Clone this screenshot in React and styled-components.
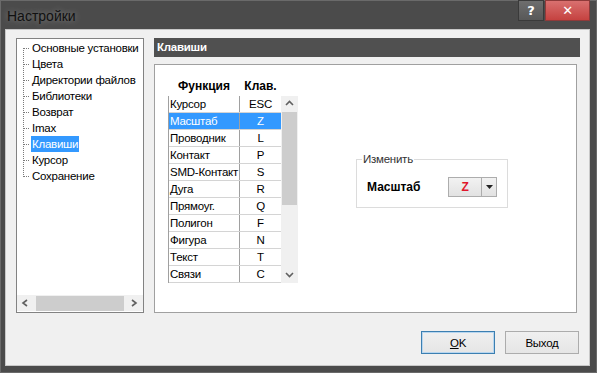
import React from 'react';
import styled, { createGlobalStyle } from 'styled-components';

const GlobalStyle = createGlobalStyle`
  html, body { margin: 0; padding: 0; background: #4a4a4a; }
  body {
    font-family: "Liberation Sans", Arial, sans-serif;
    font-size: 11.5px;
    letter-spacing: -0.25px;
    color: #000;
  }
  * { box-sizing: border-box; }
`;

const treeItems = [
  'Основные установки',
  'Цвета',
  'Директории файлов',
  'Библиотеки',
  'Возврат',
  'Imax',
  'Клавиши',
  'Курсор',
  'Сохранение',
];

const keys = [
  ['Курсор', 'ESC'],
  ['Масштаб', 'Z'],
  ['Проводник', 'L'],
  ['Контакт', 'P'],
  ['SMD-Контакт', 'S'],
  ['Дуга', 'R'],
  ['Прямоуг.', 'Q'],
  ['Полигон', 'F'],
  ['Фигура', 'N'],
  ['Текст', 'T'],
  ['Связи', 'C'],
];

const Window = styled.div`
  width: 597px;
  height: 373px;
  background: #4b4b4b;
  border: 1px solid #6a6a6a;
  display: flex;
  flex-direction: column;
`;

const TitleBar = styled.div`
  height: 28px;
  display: flex;
  align-items: flex-start;
  padding-left: 6px;
`;

const TitleText = styled.div`
  flex: 1;
  font-size: 14px;
  letter-spacing: 0;
  line-height: 30px;
  color: #111;
  text-shadow: 0 0 6px rgba(255, 255, 255, 0.35);
`;

const CaptionButton = styled.div`
  width: ${(p) => p.w}px;
  height: 21px;
  margin-top: -1px;
  display: flex;
  align-items: center;
  justify-content: center;
  color: #fff;
  font-weight: bold;
  font-size: 13px;
  font-family: "DejaVu Sans", sans-serif;
  border: 1px solid ${(p) => (p.close ? '#8e3a3a' : '#3a3a3a')};
  background: ${(p) => (p.close ? 'linear-gradient(#d9706f, #c54240)' : 'linear-gradient(#6e6e6e, #585858)')};
  margin-right: ${(p) => p.mr || 0}px;
`;

const Client = styled.div`
  flex: 1;
  margin: 0 6px 6px 4px;
  background: #f0f0f0;
  border: 1px solid #c8c8c8;
  display: flex;
  flex-direction: column;
  padding: 8px 10px 0 10px;
`;

const Main = styled.div`
  display: flex;
  gap: 10px;
  height: 275px;
`;

const Tree = styled.div`
  width: 128px;
  background: #fff;
  border: 1px solid #828282;
  display: flex;
  flex-direction: column;
  justify-content: space-between;
`;

const TreeList = styled.div`
  position: relative;
  padding: 1px 0 0 14px;
  &::before {
    content: '';
    position: absolute;
    left: 6px;
    top: 9px;
    height: 129px;
    border-left: 1px dotted #7a7a7a;
  }
`;

const TreeItem = styled.div`
  position: relative;
  height: 16px;
  line-height: 16px;
  white-space: nowrap;
  &::before {
    content: '';
    position: absolute;
    left: -8px;
    top: 8px;
    width: 6px;
    border-top: 1px dotted #7a7a7a;
  }
`;

const TreeLabel = styled.span`
  padding: 0 1px;
  display: inline-block;
  background: ${(p) => (p.sel ? '#3399ff' : 'transparent')};
  color: ${(p) => (p.sel ? '#fff' : '#000')};
`;

const HScroll = styled.div`
  height: 16px;
  margin: 0 0 1px 0;
  display: flex;
  align-items: center;
  background: #f0f0f0;
`;

const Arrow = styled.div`
  width: 17px;
  height: 16px;
  display: flex;
  align-items: center;
  justify-content: center;
`;

const HThumb = styled.div`
  flex: 1;
  height: 15px;
  background: #cdcdcd;
  margin: 0 2px;
`;

const RightPanel = styled.div`
  flex: 1;
  display: flex;
  flex-direction: column;
`;

const Header = styled.div`
  height: 19px;
  background: #505050;
  color: #fff;
  font-weight: bold;
  line-height: 19px;
  padding-left: 3px;
  margin-right: -1px;
`;

const Panel = styled.div`
  margin-top: 7px;
  margin-right: 2px;
  flex: 1;
  background: #fff;
  border: 1px solid #a0a0a0;
  display: flex;
  align-items: flex-start;
  padding: 10px 0 0 13px;
`;

const Table = styled.div`
  width: 130px;
  display: flex;
  flex-direction: column;
`;

const HeadRow = styled.div`
  display: flex;
  height: 21px;
  align-items: center;
  font-weight: bold;
  font-size: 12px;
  letter-spacing: 0;
`;

const HeadCell = styled.div`
  width: ${(p) => p.w}px;
  text-align: center;
`;

const Body = styled.div`
  display: flex;
  border-left: 1px solid #a0a0a0;
`;

const Rows = styled.div`
  width: 112px;
  display: flex;
  flex-direction: column;
`;

const Row = styled.div`
  display: flex;
  height: 17px;
  line-height: 16px;
  border-bottom: 1px solid #d4d4d4;
  background: ${(p) => (p.sel ? '#3399ff' : '#fff')};
  color: ${(p) => (p.sel ? '#fff' : '#000')};
`;

const NameCell = styled.div`
  width: 71px;
  padding-left: 1px;
  border-right: 1px solid #a0a0a0;
  white-space: nowrap;
  overflow: hidden;
`;

const KeyCell = styled.div`
  flex: 1;
  text-align: center;
`;

const VScroll = styled.div`
  width: 17px;
  background: #f0f0f0;
  display: flex;
  flex-direction: column;
  align-items: center;
`;

const VThumb = styled.div`
  width: 15px;
  height: 93px;
  background: #cdcdcd;
`;

const VSpacer = styled.div`
  flex: 1;
`;

const Group = styled.fieldset`
  margin: 78px 0 0 58px;
  width: 152px;
  height: 55px;
  border: 1px solid #dcdcdc;
  padding: 0 0 0 10px;
  display: flex;
  align-items: center;
`;

const Legend = styled.legend`
  padding: 0 1px;
  margin-left: -5px;
  color: #333;
  line-height: 12px;
`;

const GroupRow = styled.div`
  display: flex;
  align-items: center;
  margin-top: 2px;
`;

const GroupLabel = styled.div`
  width: 81px;
  font-weight: bold;
  font-size: 12px;
  letter-spacing: 0;
`;

const SplitButton = styled.div`
  display: flex;
  height: 20px;
  border: 1px solid #adadad;
  background: linear-gradient(#f2f2f2, #e2e2e2);
`;

const SplitMain = styled.div`
  width: 33px;
  display: flex;
  align-items: center;
  justify-content: center;
  color: #e0162b;
  font-weight: bold;
  font-size: 12px;
  border-right: 1px solid #adadad;
`;

const SplitDrop = styled.div`
  width: 14px;
  display: flex;
  align-items: center;
  justify-content: center;
`;

const Footer = styled.div`
  flex: 1;
  display: flex;
  justify-content: flex-end;
  align-items: flex-start;
  gap: 10px;
  padding-top: 18px;
`;

const Button = styled.div`
  width: 74px;
  height: 23px;
  display: flex;
  align-items: center;
  justify-content: center;
  border: 1px solid ${(p) => (p.primary ? '#3c7fb1' : '#acacac')};
  background: linear-gradient(#f0f0f0, #e5e5e5);
  box-shadow: ${(p) => (p.primary ? 'inset 0 0 0 1px #b8d6ef' : 'none')};
`;

const Underline = styled.span`
  text-decoration: underline;
`;

const Chevron = ({ dir }) => {
  const d = {
    left: 'M6 2 L2 5 L6 8',
    right: 'M2 2 L6 5 L2 8',
    up: 'M1 6 L4.5 2.5 L8 6',
    down: 'M1 3 L4.5 6.5 L8 3',
  }[dir];
  return (
    <svg width="9" height="10" viewBox="0 0 9 10">
      <path d={d} fill="none" stroke="#606060" strokeWidth="1.6" />
    </svg>
  );
};

export default function App() {
  return (
    <>
      <GlobalStyle />
      <Window>
        <TitleBar>
          <TitleText>Настройки</TitleText>
          <CaptionButton w={26} mr={1}>?</CaptionButton>
          <CaptionButton w={45} close mr={6}>✕</CaptionButton>
        </TitleBar>
        <Client>
          <Main>
            <Tree>
              <TreeList>
                {treeItems.map((t) => (
                  <TreeItem key={t}>
                    <TreeLabel sel={t === 'Клавиши'}>{t}</TreeLabel>
                  </TreeItem>
                ))}
              </TreeList>
              <HScroll>
                <Arrow><Chevron dir="left" /></Arrow>
                <HThumb />
                <Arrow><Chevron dir="right" /></Arrow>
              </HScroll>
            </Tree>
            <RightPanel>
              <Header>Клавиши</Header>
              <Panel>
                <Table>
                  <HeadRow>
                    <HeadCell w={72}>Функция</HeadCell>
                    <HeadCell w={41}>Клав.</HeadCell>
                  </HeadRow>
                  <Body>
                    <Rows>
                      {keys.map(([name, key]) => (
                        <Row key={name} sel={name === 'Масштаб'}>
                          <NameCell>{name}</NameCell>
                          <KeyCell>{key}</KeyCell>
                        </Row>
                      ))}
                    </Rows>
                    <VScroll>
                      <Arrow><Chevron dir="up" /></Arrow>
                      <VThumb />
                      <VSpacer />
                      <Arrow><Chevron dir="down" /></Arrow>
                    </VScroll>
                  </Body>
                </Table>
                <Group>
                  <Legend>Изменить</Legend>
                  <GroupRow>
                    <GroupLabel>Масштаб</GroupLabel>
                    <SplitButton>
                      <SplitMain>Z</SplitMain>
                      <SplitDrop>
                        <svg width="7" height="4" viewBox="0 0 7 4">
                          <path d="M0 0 H7 L3.5 4 Z" fill="#222" />
                        </svg>
                      </SplitDrop>
                    </SplitButton>
                  </GroupRow>
                </Group>
              </Panel>
            </RightPanel>
          </Main>
          <Footer>
            <Button primary><Underline>O</Underline>K</Button>
            <Button>Выход</Button>
          </Footer>
        </Client>
      </Window>
    </>
  );
}
